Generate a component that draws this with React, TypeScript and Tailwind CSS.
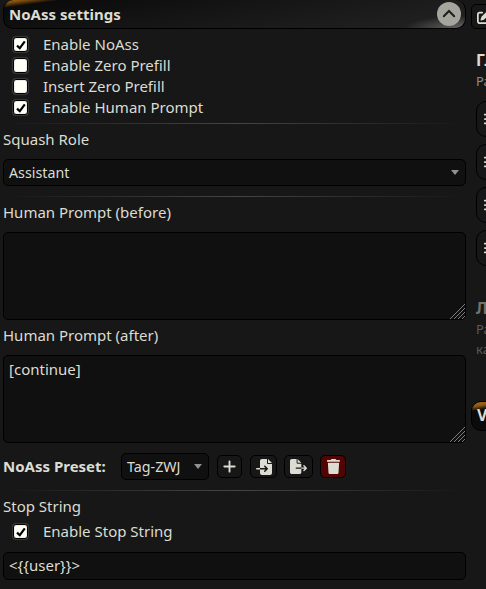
import { ReactNode } from "react";
import {
    FaBars,
    FaFileExport,
    FaFileImport,
    FaPenToSquare,
    FaPlus,
    FaTrash,
} from "react-icons/fa6";

interface ICheckRow {
    label: string;
    checked: boolean;
}

const options: ICheckRow[] = [
    { label: "Enable NoAss", checked: true },
    { label: "Enable Zero Prefill", checked: false },
    { label: "Insert Zero Prefill", checked: false },
    { label: "Enable Human Prompt", checked: true },
];

const CheckRow = ({ label, checked }: ICheckRow) => {
    return (
        <label className="flex items-center h-[21px] pl-[10px]">
            <span className="flex items-center justify-center size-[15px] shrink-0 rounded-[3px] border border-black bg-[#fffff8] shadow-[inset_0_0_1px_#555,0_0_1px_1px_#3a3a3a]">
                {checked && (
                    <svg viewBox="0 0 12 12" className="size-3" fill="none">
                        <path d="M2 6.6 4.8 9.2 9.8 2.4" stroke="#000" strokeWidth="2.2" />
                    </svg>
                )}
            </span>
            <span className="ml-[15px]">{label}</span>
        </label>
    );
};

const Rule = () => (
    <div className="h-px w-full bg-linear-to-r from-transparent via-[#464446] to-transparent" />
);

const Caret = () => (
    <svg viewBox="0 0 8 5" className="w-2 h-[5px]">
        <path d="M0 0h8L4 5z" fill="#919191" />
    </svg>
);

const TextBox = ({ children }: { children?: ReactNode }) => {
    return (
        <div className="relative h-[88px] rounded-[5px] border border-black bg-[#101010] px-[5px] pt-[3px]">
            {children}
            <svg viewBox="0 0 15 15" className="absolute right-0 bottom-0 size-[15px]" fill="none">
                <path d="M0 15 15 0M4 15 15 4M8 15 15 8M12 15 15 12" stroke="#999" strokeWidth="0.8" />
            </svg>
        </div>
    );
};

const Sidebar = () => {
    return (
        <div className="w-[15px] shrink-0 overflow-hidden text-[#dcdcd2]">
            <div className="mt-1 h-[25px] w-10 rounded-[5px] border border-black pl-[5px] pt-[5px]">
                <FaPenToSquare className="size-[14px]" />
            </div>
            <div className="mt-[21px] h-[21px] pl-[5px] text-[16px] leading-[21px] font-bold">Гл</div>
            <div className="h-5 pl-[5px] text-[13px] leading-5 text-[#8d8d87]">Ра</div>
            <div className="mt-[10px] ml-[5px] flex flex-col gap-[7px] w-10">
                {[0, 1, 2, 3].map((item) => (
                    <div key={item} className="flex h-9 w-10 items-center rounded-[10px] border border-black pl-[6px]">
                        <FaBars className="size-[14px]" />
                    </div>
                ))}
            </div>
            <div className="mt-8 h-[21px] pl-[5px] text-[16px] leading-[21px] font-bold text-[#73736e]">Л</div>
            <div className="h-5 pl-[5px] text-[13px] leading-5 text-[#5b5b57]">Ра</div>
            <div className="h-5 pl-[5px] text-[13px] leading-5 text-[#5b5b57]">ка</div>
            <div className="mt-[42px] h-[30px] w-24 rounded-[10px] border border-black bg-[linear-gradient(170deg,#b56f14_0%,#8a5512_5px,#0b0b0b_9px)] pl-[5px] text-[16px] leading-[27px] font-bold">
                V
            </div>
        </div>
    );
};

const App = () => {
    return (
        <div className="flex h-[589px] w-[486px] overflow-hidden bg-[#171717] font-['Noto_Sans','Liberation_Sans',sans-serif] text-[15px] leading-[21px] text-[#dcdcd2]">
            <div className="ml-[3px] mr-[5px] flex w-[463px] shrink-0 flex-col">
                <div className="flex h-[29px] shrink-0 items-center justify-between overflow-hidden rounded-[10px] border border-t-0 border-black bg-[linear-gradient(172deg,#b56f14_0px,#6e430f_4px,transparent_8px),radial-gradient(ellipse_60px_12px_at_100%_100%,#686868,transparent),linear-gradient(170deg,#080808,#141414_40%,#232323)] pl-[5px] pr-1">
                    <span className="font-bold">NoAss settings</span>
                    <svg viewBox="0 0 24 24" className="size-6" fill="none">
                        <circle cx="12" cy="12" r="12" fill="#a5a59d" />
                        <path d="M6.8 14.2 12 9l5.2 5.2" stroke="#1e1e1e" strokeWidth="2" strokeLinecap="round" />
                    </svg>
                </div>

                <div className="mt-[5px] mb-[5px]">
                    {options.map((option) => (
                        <CheckRow key={option.label} {...option} />
                    ))}
                </div>
                <Rule />
                <div className="mt-[5px]">Squash Role</div>
                <div className="mt-[9px] flex h-[27px] items-center justify-between rounded-[5px] border border-black bg-[#101010] pl-[5px] pr-[6px] text-[14.25px]">
                    <span>Assistant</span>
                    <Caret />
                </div>
                <div className="mt-[10px]">
                    <Rule />
                </div>
                <div className="mt-[5px] mb-[9px]">Human Prompt (before)</div>
                <TextBox />
                <div className="mt-[5px] mb-[9px]">Human Prompt (after)</div>
                <TextBox>[continue]</TextBox>

                <div className="mt-[10px] flex h-[27px] items-center">
                    <span className="w-[118px] font-bold">NoAss Preset:</span>
                    <div className="flex h-[27px] w-[88px] items-center justify-between rounded-[5px] border border-black bg-[#101010] pl-[5px] pr-[6px] text-[14.25px]">
                        <span>Tag-ZWJ</span>
                        <Caret />
                    </div>
                    <div className="ml-2 flex h-[23px] w-[25px] items-center justify-center rounded-[5px] border border-black">
                        <FaPlus className="size-[15px]" />
                    </div>
                    <div className="ml-2 flex h-[23px] w-[27px] items-center justify-center rounded-[5px] border border-black">
                        <FaFileImport className="size-4" />
                    </div>
                    <div className="ml-[7px] flex h-[23px] w-[29px] items-center justify-center rounded-[5px] border border-black">
                        <FaFileExport className="size-[17px]" />
                    </div>
                    <div className="ml-[7px] flex h-[23px] w-[26px] items-center justify-center rounded-[5px] border border-black bg-[#500404]">
                        <FaTrash className="size-[15px]" />
                    </div>
                </div>
                <div className="mt-[10px]">
                    <Rule />
                </div>
                <div className="mt-[5px] mb-[4px]">Stop String</div>
                <CheckRow label="Enable Stop String" checked />
                <div className="mt-[10px] h-7 rounded-[5px] border border-black bg-[#101010] pl-[5px] leading-[25px]">
                    {"<{{user}}>"}
                </div>
            </div>
            <Sidebar />
        </div>
    );
};

export default App;
